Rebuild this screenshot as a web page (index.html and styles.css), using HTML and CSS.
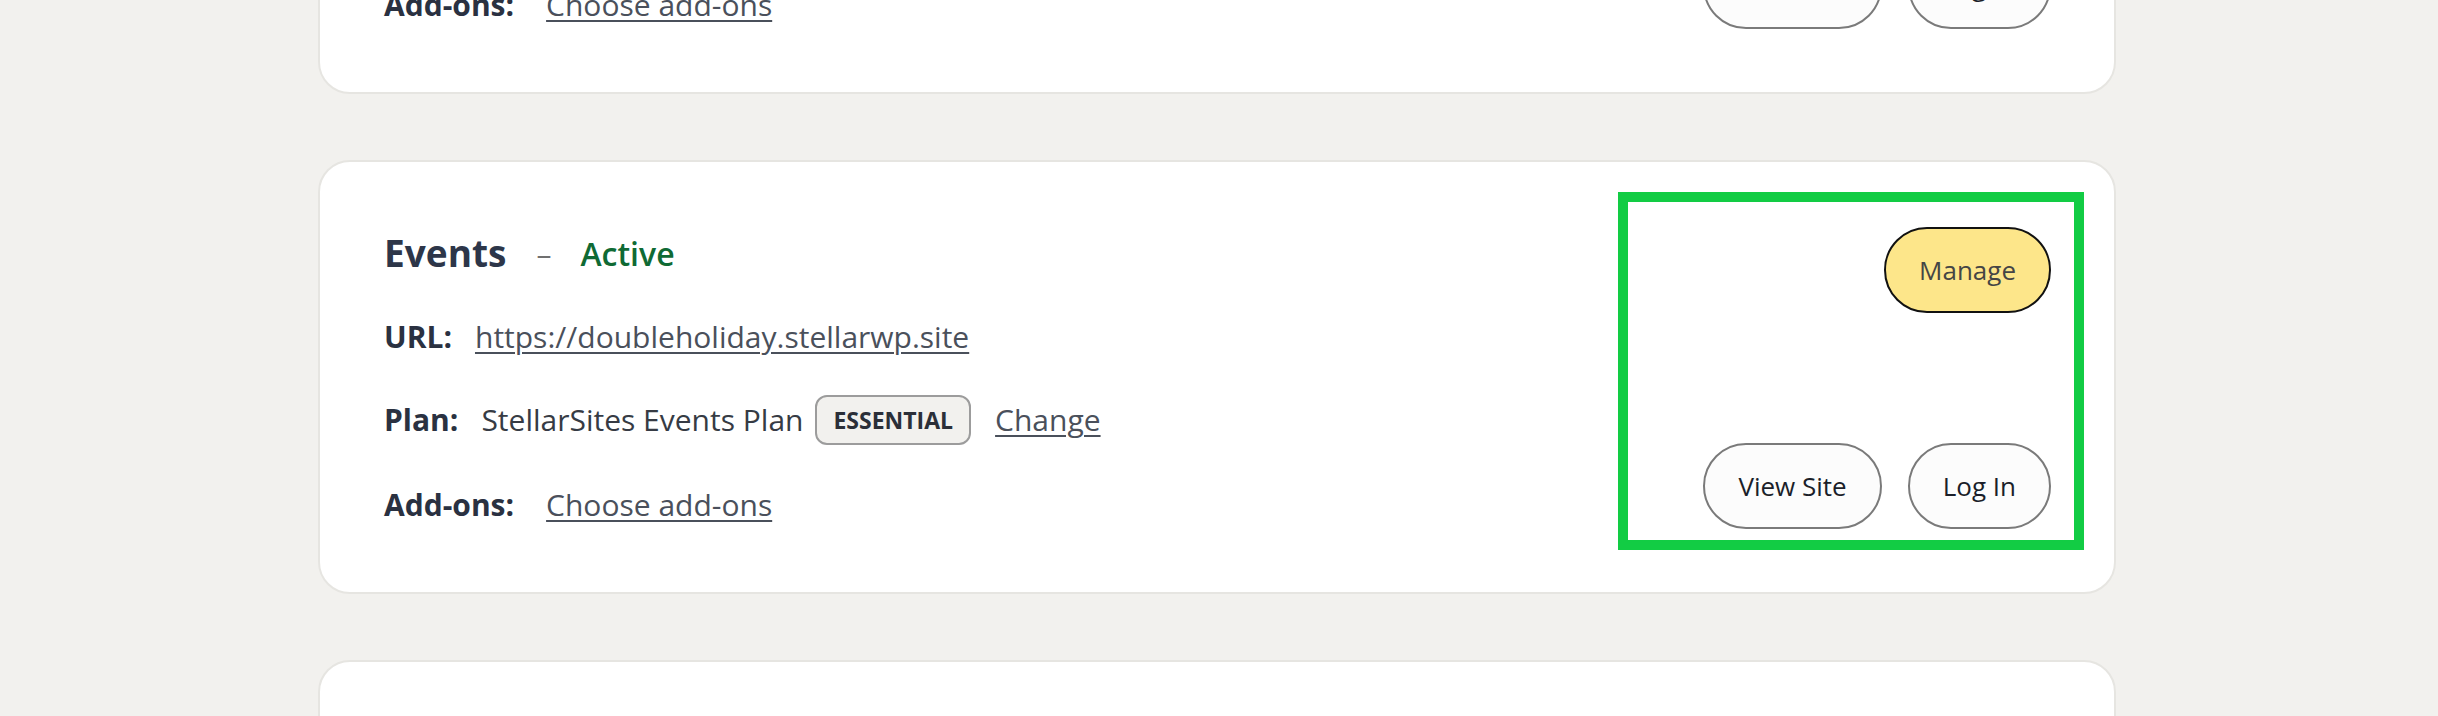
FILE: index.html
```html
<!DOCTYPE html>
<html lang="en">
<head>
<meta charset="utf-8">
<title>Sites</title>
<link rel="stylesheet" href="styles.css">
</head>
<body>
<main class="site-list">
  <section class="site-card">
    <div class="site-info">
      <div class="site-title"><h3 class="site-name">Main Site</h3><span class="dash">–</span><span class="status">Active</span></div>
      <div class="info-row"><span class="label">URL:</span><a class="link" href="#">https://mainsite.stellarwp.site</a></div>
      <div class="info-row plan-row"><span class="label">Plan:</span><span class="value">StellarSites Plan</span><span class="badge">ESSENTIAL</span><a class="link change" href="#">Change</a></div>
      <div class="info-row addons-row"><span class="label">Add-ons:</span><a class="link" href="#">Choose add-ons</a></div>
    </div>
    <div class="site-actions">
      <button class="btn btn-primary">Manage</button>
      <div class="btn-group"><button class="btn btn-outline">View Site</button><button class="btn btn-outline">Log In</button></div>
    </div>
  </section>

  <section class="site-card">
    <div class="site-info">
      <div class="site-title"><h3 class="site-name">Events</h3><span class="dash">–</span><span class="status">Active</span></div>
      <div class="info-row"><span class="label">URL:</span><a class="link" href="#">https://doubleholiday.stellarwp.site</a></div>
      <div class="info-row plan-row"><span class="label">Plan:</span><span class="value">StellarSites Events Plan</span><span class="badge">ESSENTIAL</span><a class="link change" href="#">Change</a></div>
      <div class="info-row addons-row"><span class="label">Add-ons:</span><a class="link" href="#">Choose add-ons</a></div>
    </div>
    <div class="site-actions">
      <button class="btn btn-primary">Manage</button>
      <div class="btn-group"><button class="btn btn-outline">View Site</button><button class="btn btn-outline">Log In</button></div>
    </div>
    <div class="highlight"></div>
  </section>

  <section class="site-card">
    <div class="site-info">
      <div class="site-title"><h3 class="site-name">Store</h3><span class="dash">–</span><span class="status">Active</span></div>
      <div class="info-row"><span class="label">URL:</span><a class="link" href="#">https://store.stellarwp.site</a></div>
      <div class="info-row plan-row"><span class="label">Plan:</span><span class="value">StellarSites Store Plan</span><span class="badge">ESSENTIAL</span><a class="link change" href="#">Change</a></div>
      <div class="info-row addons-row"><span class="label">Add-ons:</span><a class="link" href="#">Choose add-ons</a></div>
    </div>
    <div class="site-actions">
      <button class="btn btn-primary">Manage</button>
      <div class="btn-group"><button class="btn btn-outline">View Site</button><button class="btn btn-outline">Log In</button></div>
    </div>
  </section>
</main>
</body>
</html>
```
FILE: styles.css
```css
* { box-sizing: border-box; }

html, body {
  margin: 0;
  padding: 0;
  background: #f2f1ee;
  font-family: "Open Sans", "Noto Sans", "Liberation Sans", sans-serif;
  color: #2c3342;
  overflow: hidden;
}

.site-list {
  display: flex;
  flex-direction: column;
  align-items: flex-start;
  gap: 66px;
  margin-top: -340px;
  padding-left: 318px;
}

.site-card {
  position: relative;
  width: 1798px;
  height: 434px;
  background: #ffffff;
  border: 2px solid #e6e5e1;
  border-radius: 32px;
  padding: 65px 63px 63px 64px;
  display: flex;
  justify-content: space-between;
  flex-shrink: 0;
}

.site-info {
  display: flex;
  flex-direction: column;
  gap: 35px;
}

.site-title {
  display: flex;
  align-items: center;
  height: 52px;
}

.site-name {
  margin: 0;
  font-size: 37px;
  font-weight: 700;
  line-height: 52px;
  color: #2d3649;
}

.dash {
  font-size: 30px;
  color: #707070;
  margin: 0 29px 0 30px;
}

.status {
  font-size: 32px;
  font-weight: 600;
  color: #0f6a34;
}

.info-row {
  display: flex;
  align-items: center;
  gap: 23px;
  font-size: 30px;
  line-height: 46px;
}

.plan-row { min-height: 50px; }
.addons-row { margin-top: 2px; gap: 32px; }

.label {
  font-weight: 700;
  color: #2a3141;
}

.value { color: #363b44; }

.link {
  color: #4a505b;
  text-decoration: underline;
  text-decoration-thickness: 2px;
  text-underline-offset: 4px;
}

.badge {
  margin-left: -11px;
  height: 50px;
  display: inline-flex;
  align-items: center;
  padding: 0 16px;
  border: 2px solid #9c9c9c;
  border-radius: 12px;
  background: #f2f1ee;
  font-size: 23px;
  font-weight: 700;
  color: #2b2f38;
  line-height: 1;
}

.change { margin-left: 1px; }

.site-actions {
  display: flex;
  flex-direction: column;
  justify-content: space-between;
  align-items: flex-end;
}

.btn-group {
  display: flex;
  gap: 26px;
}

.btn {
  height: 86px;
  padding: 0 33px;
  border-radius: 43px;
  font-family: "Open Sans", "Noto Sans", "Liberation Sans", sans-serif;
  font-size: 26px;
  cursor: pointer;
}

.btn-primary {
  background: #fde68a;
  border: 2px solid #111111;
  color: #454545;
}

.btn-outline {
  background: #fcfcfc;
  border: 2px solid #7a7a7a;
  color: #1b1f2a;
}

.highlight {
  position: absolute;
  top: 30px;
  right: 30px;
  width: 466px;
  height: 358px;
  border: 10px solid #12cc44;
  pointer-events: none;
}
```
